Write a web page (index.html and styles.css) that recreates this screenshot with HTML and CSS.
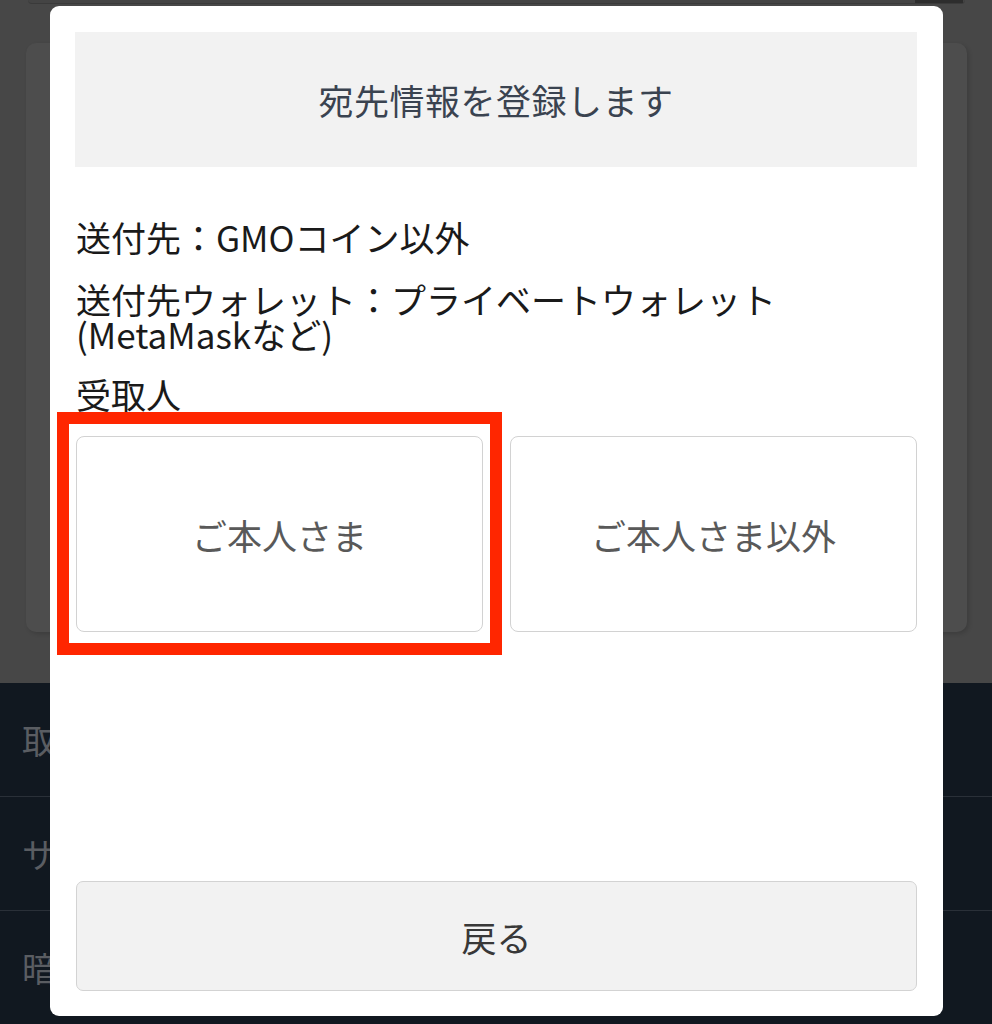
FILE: index.html
```html
<!DOCTYPE html>
<html lang="ja">
    <head>
        <meta charset="utf-8">
        <title>宛先情報を登録します</title>
        <link rel="stylesheet" href="styles.css">
    </head>
    <body>
        <div class="page">
            <div class="topbar"><span class="topbar-btn"></span></div>
            <div class="card"></div>
            <ul class="footer-menu">
                <li>取引ルール</li>
                <li>サポート</li>
                <li>暗号資産の取引について</li>
            </ul>
        </div>

        <div class="modal">
            <h2 class="modal-title">宛先情報を登録します</h2>
            <p class="info">送付先：GMOコイン以外</p>
            <p class="info">送付先ウォレット：プライベートウォレット<br>(MetaMaskなど)</p>
            <p class="info">受取人</p>
            <div class="choices">
                <div class="choice-wrap">
                    <button class="choice">ご本人さま</button>
                    <span class="highlight"></span>
                </div>
                <div class="choice-wrap">
                    <button class="choice">ご本人さま以外</button>
                </div>
            </div>
            <button class="btn-back">戻る</button>
        </div>
    </body>
</html>
```

FILE: styles.css
```css
html, body {
    margin: 0;
    padding: 0;
}
body {
    width: 992px;
    height: 1024px;
    overflow: hidden;
    background-color: #474747;
    font-family: "Noto Sans CJK JP", "Noto Sans", sans-serif;
    position: relative;
}
.page {
    height: 1024px;
    display: flex;
    flex-direction: column;
}
.topbar {
    height: 3px;
    margin: 0 27px 0 28px;
    background-color: #444;
    border-bottom: 1px solid #3a3a3a;
    border-radius: 0 0 8px 8px;
    display: flex;
    justify-content: flex-end;
}
.topbar-btn {
    width: 48px;
    height: 3px;
    margin-right: 2px;
    background-color: #2d2d2d;
}
.card {
    margin: 39px 25px 0 26px;
    height: 589px;
    background-color: #4d4d4d;
    border-radius: 10px;
    box-shadow: 2px 2px 4px rgba(0, 0, 0, 0.15);
}
.footer-menu {
    list-style: none;
    margin: 51px 0 0 0;
    padding: 0;
    flex: 1;
    background-color: #111820;
}
.footer-menu li {
    height: 113px;
    line-height: 113px;
    padding-left: 22px;
    font-size: 34px;
    color: #5a5d62;
    border-bottom: 1px solid #2a3038;
    white-space: nowrap;
}
.footer-menu li:last-child {
    border-bottom: none;
}

/* モーダル */
.modal {
    position: absolute;
    left: 50px;
    top: 6px;
    width: 893px;
    height: 1010px;
    box-sizing: border-box;
    padding: 26px 26px 25px 25px;
    background-color: #fff;
    border-radius: 9px;
    display: flex;
    flex-direction: column;
}
.modal-title {
    margin: 0 0 52px 0;
    height: 135px;
    background-color: #f2f2f2;
    color: #3a4350;
    font-size: 35px;
    font-weight: normal;
    display: flex;
    align-items: center;
    justify-content: center;
    letter-spacing: 0.5px;
}
.info {
    margin: 0 0 27px 1px;
    font-size: 35px;
    line-height: 35px;
    color: #1a1a1a;
}
.info:nth-of-type(3) {
    margin-bottom: 0;
    position: relative;
    top: -2px;
}
.choices {
    margin: 23px 0 0 1px;
    display: flex;
    gap: 27px;
}
.choice-wrap {
    position: relative;
    width: 407px;
    height: 196px;
}
.choice {
    width: 100%;
    height: 100%;
    background-color: #fff;
    border: 1.5px solid #d2d2d2;
    border-radius: 8px;
    font-family: inherit;
    font-size: 35px;
    color: #595959;
}
.highlight {
    position: absolute;
    top: -24px;
    left: -19px;
    right: -19px;
    bottom: -23px;
    border: 12px solid #ff2600;
}
.btn-back {
    margin: auto 0 0 1px;
    height: 110px;
    background-color: #f2f2f2;
    border: 1.5px solid #d3d3d3;
    border-radius: 7px;
    font-family: inherit;
    font-size: 35px;
    color: #383838;
}
```
